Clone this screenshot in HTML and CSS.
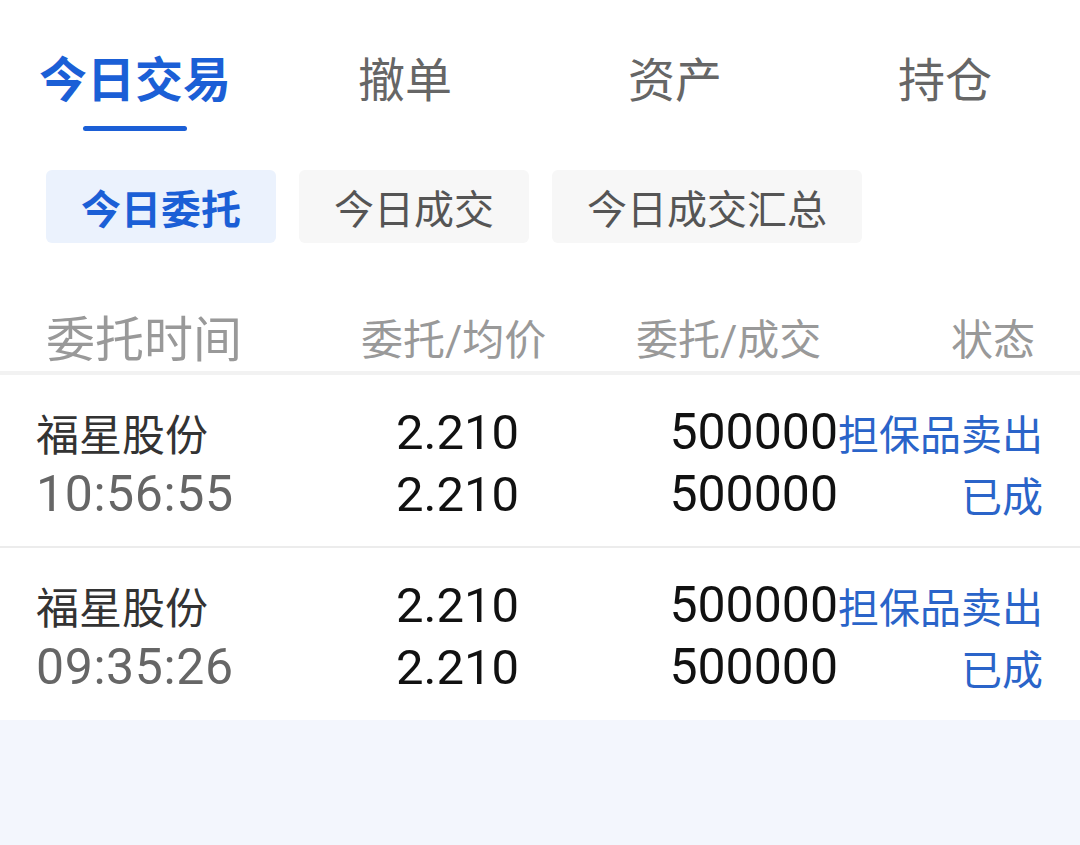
FILE: index.html
```html
<!DOCTYPE html>
<html lang="zh-CN">
<head>
  <meta charset="UTF-8" />
  <meta name="viewport" content="width=device-width, initial-scale=1.0"/>
  <title>今日交易</title>
  <link rel="stylesheet" href="styles.css">
</head>
<body>

  <div class="tabs">
    <div class="tab active">今日交易</div>
    <div class="tab">撤单</div>
    <div class="tab">资产</div>
    <div class="tab">持仓</div>
  </div>

  <div class="pills">
    <div class="pill active">今日委托</div>
    <div class="pill">今日成交</div>
    <div class="pill wide">今日成交汇总</div>
  </div>

  <div class="head">
    <span class="h-time">委托时间</span>
    <span>委托/均价</span>
    <span>委托/成交</span>
    <span class="h-state">状态</span>
  </div>

  <div class="list">
    <div class="row">
      <div class="name">福星股份</div>
      <div class="num">2.210</div>
      <div class="num right">500000</div>
      <div class="state">担保品卖出</div>
      <div class="time">10:56:55</div>
      <div class="num">2.210</div>
      <div class="num right">500000</div>
      <div class="state">已成</div>
    </div>
    <div class="row">
      <div class="name">福星股份</div>
      <div class="num">2.210</div>
      <div class="num right">500000</div>
      <div class="state">担保品卖出</div>
      <div class="time">09:35:26</div>
      <div class="num">2.210</div>
      <div class="num right">500000</div>
      <div class="state">已成</div>
    </div>
  </div>

</body>
</html>
```

FILE: styles.css
```css
* {
  margin: 0;
  padding: 0;
  box-sizing: border-box;
}

body {
  font-family: Roboto, "Noto Sans CJK SC", sans-serif;
  background: #f3f6fd;
  color: #333;
  min-height: 100vh;
}

/* top tabs */
.tabs {
  display: flex;
  background: #fff;
  padding-top: 50px;
}

.tab {
  width: 270px;
  display: flex;
  flex-direction: column;
  align-items: center;
  font-size: 47px;
  line-height: 62px;
  color: #666;
  padding-bottom: 19px;
}

.tab.active {
  color: #1b5fd6;
  font-weight: bold;
  font-size: 48px;
  padding-bottom: 0;
}

.tab.active::after {
  content: "";
  display: block;
  width: 104px;
  height: 5px;
  margin-top: 14px;
  border-radius: 3px;
  background: #1b5fd6;
}

/* sub tabs */
.pills {
  display: flex;
  gap: 23px;
  background: #fff;
  padding: 39px 46px 0;
}

.pill {
  width: 230px;
  height: 73px;
  border-radius: 6px;
  background: #f7f7f7;
  color: #555;
  font-size: 40px;
  display: flex;
  align-items: center;
  justify-content: center;
}

.pill.wide {
  width: 310px;
}

.pill.active {
  background: #ebf2fd;
  color: #1b5fd6;
  font-weight: bold;
}

/* table header */
.head {
  display: grid;
  grid-template-columns: 315px 275px 1fr auto;
  align-items: center;
  background: #fff;
  padding: 68px 45px 0 46px;
  color: #999;
  font-size: 42px;
  line-height: 60px;
  border-bottom: 4px solid #f2f2f2;
}

.head .h-time {
  font-size: 49px;
}

/* rows */
.list {
  background: #fff;
}

.row {
  display: grid;
  grid-template-columns: 360px 160px 282px 1fr;
  grid-auto-rows: 62px;
  align-items: center;
  padding: 26px 37px 21px 36px;
  border-bottom: 2px solid #ececec;
}

.row:last-child {
  border-bottom: none;
  padding-bottom: 22px;
}

.name {
  font-size: 43px;
  color: #333;
}

.time {
  font-size: 50px;
  letter-spacing: 0.6px;
  color: #666;
}

.num {
  font-size: 49px;
  color: #111;
}

.num.right {
  font-size: 50px;
  text-align: right;
}

.state {
  font-size: 41px;
  color: #2a64c9;
  text-align: right;
}
```
